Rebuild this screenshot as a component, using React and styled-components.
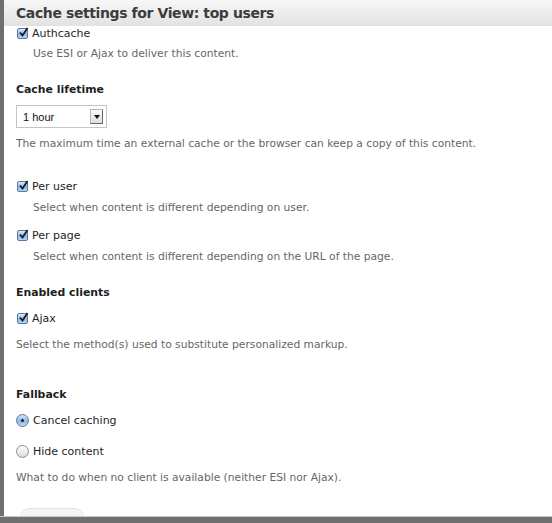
import styled, { createGlobalStyle } from 'styled-components';

const GlobalStyle = createGlobalStyle`
    html, body {
        margin: 0;
        padding: 0;
        background: #6e6e6e;
    }
    body {
        font-family: 'DejaVu Sans', 'Liberation Sans', sans-serif;
    }
`;

const Backdrop = styled.div`
    width: 552px;
    height: 523px;
    display: flex;
    background: linear-gradient(#c9c9c9, #c9c9c9) 0 516px / 100% 1px no-repeat, #6f6f6f;
    overflow: hidden;
`;

const Dialog = styled.div`
    margin-left: 4px;
    flex: 1;
    height: 516px;
    background: #fff;
    display: flex;
    flex-direction: column;
    overflow: hidden;
`;

const TitleBar = styled.div`
    height: 26px;
    flex: none;
    display: flex;
    align-items: center;
    padding-left: 12px;
    background: linear-gradient(#f7f7f7, #e2e2e2);
`;

const Title = styled.h1`
    margin: 0;
    font-size: 14px;
    letter-spacing: -0.4px;
    font-weight: bold;
    color: #3c3c3c;
`;

const Content = styled.div`
    padding: 0 12px;
    display: flex;
    flex-direction: column;
    align-items: flex-start;
`;

const OptionRow = styled.label`
    display: flex;
    align-items: center;
    height: 14px;
    margin-top: ${(p) => p.$mt || 0}px;
    font-size: 11px;
    color: #1e1e1e;
    gap: 4px;
`;

const Description = styled.div`
    margin-top: ${(p) => p.$mt || 0}px;
    margin-left: ${(p) => (p.$indent ? 17 : 0)}px;
    line-height: 16px;
    font-size: 10.7px;
    color: #666;
`;

const Heading = styled.div`
    margin-top: ${(p) => p.$mt || 0}px;
    line-height: 16px;
    font-size: 10.9px;
    font-weight: bold;
    color: #1e1e1e;
`;

const CheckBox = styled.span`
    width: 11px;
    height: 11px;
    flex: none;
    box-sizing: border-box;
    border: 1px solid #5878a0;
    border-radius: 2px;
    background: linear-gradient(#dbe9f8, #8ab7ea 55%, #b9d6f5);
    display: flex;
    align-items: center;
    justify-content: center;
    position: relative;
    margin-left: 1px;
`;

const Radio = styled.span`
    width: 13px;
    height: 13px;
    flex: none;
    box-sizing: border-box;
    border-radius: 50%;
    border: 1px solid ${(p) => (p.$checked ? '#5a7aa0' : '#8d8d8d')};
    background: ${(p) =>
        p.$checked
            ? 'linear-gradient(#d5e6f8, #8ab7ea 55%, #c2dcf6)'
            : 'linear-gradient(#fdfdfd, #dcdcdc)'};
    display: flex;
    align-items: center;
    justify-content: center;
`;

const Dot = styled.span`
    width: 3px;
    height: 3px;
    border-radius: 50%;
    background: #1a1a1a;
`;

const Select = styled.div`
    margin-top: 7px;
    width: 91px;
    height: 23px;
    box-sizing: border-box;
    border: 1px solid #c4c4c4;
    display: flex;
    align-items: center;
    justify-content: space-between;
    padding: 0 3px 0 6px;
    font-family: 'Liberation Sans', Arial, sans-serif;
    font-size: 11px;
    color: #111;
`;

const SelectArrow = styled.span`
    width: 13px;
    height: 15px;
    box-sizing: border-box;
    border: 1px solid #b5b5b5;
    border-right-color: #666;
    border-bottom-color: #666;
    background: linear-gradient(#fafafa, #dedede);
    display: flex;
    align-items: center;
    justify-content: center;
`;

const Triangle = styled.span`
    width: 0;
    height: 0;
    border-left: 3px solid transparent;
    border-right: 3px solid transparent;
    border-top: 4px solid #111;
`;

const Button = styled.div`
    margin-top: 22px;
    margin-left: 4px;
    width: 62px;
    height: 20px;
    border-radius: 10px;
    background: linear-gradient(#f6f6f6, #ececec);
    border: 1px solid #e4e4e4;
`;

function Check() {
    return (
        <CheckBox>
            <svg width="11" height="11" viewBox="0 0 11 11" style={{ position: 'absolute', left: 0, top: -2 }}>
                <path d="M2 5.5 L4.5 8.5 L9.5 1" fill="none" stroke="#1b1b1b" strokeWidth="1.8" />
            </svg>
        </CheckBox>
    );
}

export default function App() {
    return (
        <>
            <GlobalStyle />
            <Backdrop>
                <Dialog>
                    <TitleBar>
                        <Title>Cache settings for View: top users</Title>
                    </TitleBar>
                    <Content>
                        <OptionRow>
                            <Check />
                            Authcache
                        </OptionRow>
                        <Description $mt={6} $indent>
                            Use ESI or Ajax to deliver this content.
                        </Description>

                        <Heading $mt={20}>Cache lifetime</Heading>
                        <Select>
                            1 hour
                            <SelectArrow>
                                <Triangle />
                            </SelectArrow>
                        </Select>
                        <Description $mt={8}>
                            The maximum time an external cache or the browser can keep a copy of this content.
                        </Description>

                        <OptionRow $mt={27}>
                            <Check />
                            Per user
                        </OptionRow>
                        <Description $mt={7} $indent>
                            Select when content is different depending on user.
                        </Description>
                        <OptionRow $mt={12}>
                            <Check />
                            Per page
                        </OptionRow>
                        <Description $mt={7} $indent>
                            Select when content is different depending on the URL of the page.
                        </Description>

                        <Heading $mt={20}>Enabled clients</Heading>
                        <OptionRow $mt={10}>
                            <Check />
                            Ajax
                        </OptionRow>
                        <Description $mt={12}>Select the method(s) used to substitute personalized markup.</Description>

                        <Heading $mt={34}>Fallback</Heading>
                        <OptionRow $mt={10}>
                            <Radio $checked>
                                <Dot />
                            </Radio>
                            Cancel caching
                        </OptionRow>
                        <OptionRow $mt={17}>
                            <Radio />
                            Hide content
                        </OptionRow>
                        <Description $mt={12}>What to do when no client is available (neither ESI nor Ajax).</Description>
                        <Button />
                    </Content>
                </Dialog>
            </Backdrop>
        </>
    );
}
